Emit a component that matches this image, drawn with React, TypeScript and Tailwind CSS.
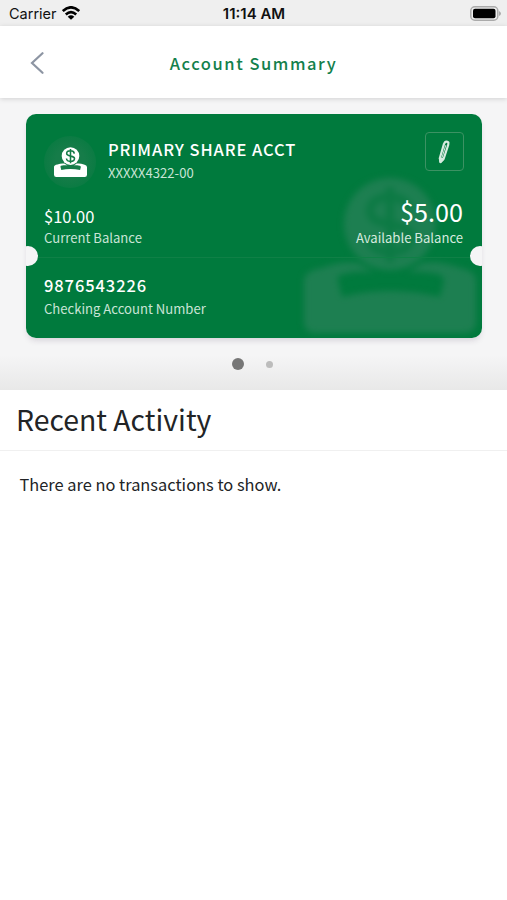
import React from "react";

const sans = "font-['Noto_Sans_CJK_SC',sans-serif]";

function ShareIcon({ className, slot }: { className: string; slot: string }) {
  return (
    <svg viewBox="0 0 172 156" preserveAspectRatio="none" className={className} fill="none" aria-hidden="true">
      <path
        d="M18 91 Q38 83 54 86 Q62 92 70 95 H50 L36 98 Q33 100 34 104 L38 120 Q60 114 86 114 Q112 114 136 120 L140 104 Q140 99 134 97 L120 95 H104 Q111 92 118 86 Q136 83 156 91 Q172 94 172 104 V144 Q172 156 160 156 H12 Q0 156 0 144 V104 Q0 94 18 91Z"
        fill="currentColor"
      />
      <circle cx="86" cy="47" r="46" fill="currentColor" />
      <path
        d="M106 34 C104 24 96 20 86 20 C74 20 66 25 66 34 C66 53 107 42 107 60 C107 70 98 75 86 75 C74 75 66 70 65 60 M86 10 V85"
        stroke={slot}
        strokeWidth="8"
      />
    </svg>
  );
}

function StatusBar() {
  return (
    <div className="flex h-[26px] items-center justify-between bg-[#efefef] pl-[9px] pr-[6px] font-['Inter',sans-serif] text-[#111]">
      <div className="flex w-[147px] items-center gap-[5px] pt-px text-[14.5px]">
        <span>Carrier</span>
        <svg viewBox="0 0 18 14" className="-mt-px h-[14px] w-[18px]" fill="none" stroke="#000" strokeWidth="2.6" aria-hidden="true">
          <path d="M.8 5.1 Q9-2.5 17.2 5.1" />
          <path d="M3.8 8.5 Q9 3.8 14.2 8.5" />
          <path d="M9 13.8 L5.7 10.7 Q9 8 12.3 10.7Z" fill="#000" stroke="none" />
        </svg>
      </div>
      <span className="whitespace-nowrap pt-[2px] text-[15px] font-semibold">11:14 AM</span>
      <div className="flex w-[149px] justify-end">
        <svg viewBox="0 0 31 15" className="h-[15px] w-[31px]" aria-hidden="true">
          <rect x=".8" y=".8" width="27" height="13.4" rx="4" fill="#efefef" stroke="#aaa" strokeWidth="1.5" />
          <rect x="3" y="2.8" width="22.5" height="9.4" rx="2" fill="#000" />
          <path d="M29 5 Q31 6 31 7.5 Q31 9 29 10Z" fill="#aaa" />
        </svg>
      </div>
    </div>
  );
}

function AccountCard() {
  return (
    <div className="relative h-[224px] overflow-hidden rounded-[10px] bg-[#007a3d] text-white">
      <ShareIcon className="absolute left-[278px] top-[63px] h-[156px] w-[172px] text-[#1d7f51] blur-[3px]" slot="#0c7a44" />
      <div className="absolute -left-[8px] top-[132px] size-[20px] rounded-full bg-[#f5f5f6]" />
      <div className="absolute -right-[8px] top-[132px] size-[20px] rounded-full bg-[#f5f5f6]" />
      <div className="relative flex h-[143px] flex-col px-[18px]">
        <div className="flex h-[82px] pt-[18px]">
          <div className="mt-[4px] flex size-[52px] items-center justify-center rounded-full bg-[radial-gradient(circle,#167c49_40%,#007a3d_100%)]">
            <ShareIcon className="h-[30px] w-[33px] text-white" slot="#167c49" />
          </div>
          <div className="ml-[12px] flex-1 pt-[5px]">
            <div className="whitespace-nowrap text-[16.5px] leading-[24px] font-medium tracking-[0.92px]">PRIMARY SHARE ACCT</div>
            <div className="mt-[2px] text-[13.1px] leading-[20px] text-[#c9e4d6]">XXXXX4322-00</div>
          </div>
          <button className="flex size-[39px] items-center justify-center rounded-[4px] border border-[#3c9263]" aria-label="Edit">
            <svg viewBox="0 0 12 24" className="mr-px h-[24px] w-[12px]" fill="none" stroke="#d6ebdf" strokeWidth="2.2" strokeLinejoin="round" aria-hidden="true">
              <path d="M6.8 2.4 Q8.4 1 10.4 2.4 L10.2 5 L5.6 19 L2.6 22 L1.8 18.2 L6 3.9Z" />
              <path d="M7.8 5.2 L4 17.6" strokeWidth="1" />
              <path d="M2 18.4 L5 19 L2.4 22Z" fill="#e0f0e7" />
            </svg>
          </button>
        </div>
        <div className="flex items-start justify-between">
          <div className="pt-[9px]">
            <div className="text-[16.5px] leading-[22px]">$10.00</div>
            <div className="mt-px text-[13.1px] leading-[20px] text-[#c9e4d6]">Current Balance</div>
          </div>
          <div className="mr-px text-right">
            <div className="text-[25.2px] leading-[31px]">$5.00</div>
            <div className="mt-px text-[13.1px] leading-[20px] text-[#d5eadf]">Available Balance</div>
          </div>
        </div>
      </div>
      <div className="relative ml-[12px] mr-[12px] h-px bg-[#0f8046]" />
      <div className="relative px-[18px] pt-[16px]">
        <div className="text-[16.5px] leading-[22px] font-medium tracking-[0.9px]">9876543226</div>
        <div className="mt-[3px] text-[13.1px] leading-[20px] text-[#c9e4d6]">Checking Account Number</div>
      </div>
    </div>
  );
}

export default function App() {
  return (
    <div className={`h-[900px] w-[507px] overflow-hidden bg-white text-[#222426] ${sans}`}>
      <StatusBar />
      <header className="relative z-10 flex h-[72px] items-center bg-white px-[30px] shadow-[0_1px_5px_rgba(0,0,0,0.15)]">
        <button className="w-[40px] pt-[2px]" aria-label="Back">
          <svg viewBox="0 0 14 22" className="h-[22px] w-[14px]" fill="none" stroke="#8d95a3" strokeWidth="2.2" strokeLinecap="round" aria-hidden="true">
            <path d="M12.5 1.2 L2 11 L12.5 20.8" />
          </svg>
        </button>
        <h1 className="flex-1 pt-[2px] text-center text-[16.5px] font-medium tracking-[1.55px] text-[#13804c]">Account Summary</h1>
        <div className="w-[40px]" />
      </header>
      <section className="h-[292px] bg-[linear-gradient(to_bottom,#f5f5f6_88%,#e8e8e8_100%)] pl-[26px] pr-[25px] pt-[16px]">
        <div className="rounded-[10px] shadow-[0_4px_6px_-2px_rgba(60,40,80,0.18)]">
          <AccountCard />
        </div>
        <div className="flex items-center pl-[206px] pt-[20px]">
          <div className="size-[12px] rounded-full bg-[#767676]" />
          <div className="ml-[22px] size-[7px] rounded-full bg-[#bcbcbc]" />
        </div>
      </section>
      <h2 className="h-[61px] border-b border-[#f0f0f0] pl-[16px] text-[28.4px] leading-[58px]">Recent Activity</h2>
      <p className="pl-[19.5px] pt-[21px] text-[16.4px] leading-[24px]">There are no transactions to show.</p>
    </div>
  );
}
